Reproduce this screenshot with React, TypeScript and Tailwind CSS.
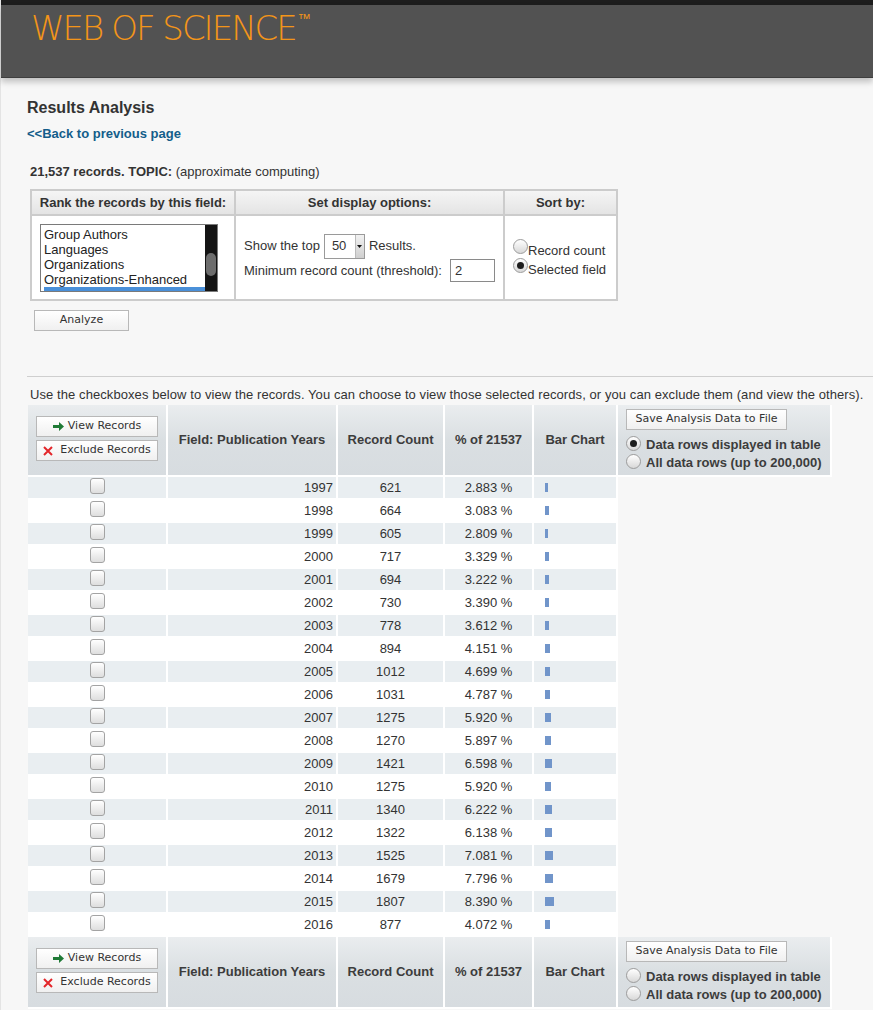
import React from 'react';

const rows: [number, number, string][] = [
  [1997, 621, '2.883'],
  [1998, 664, '3.083'],
  [1999, 605, '2.809'],
  [2000, 717, '3.329'],
  [2001, 694, '3.222'],
  [2002, 730, '3.390'],
  [2003, 778, '3.612'],
  [2004, 894, '4.151'],
  [2005, 1012, '4.699'],
  [2006, 1031, '4.787'],
  [2007, 1275, '5.920'],
  [2008, 1270, '5.897'],
  [2009, 1421, '6.598'],
  [2010, 1275, '5.920'],
  [2011, 1340, '6.222'],
  [2012, 1322, '6.138'],
  [2013, 1525, '7.081'],
  [2014, 1679, '7.796'],
  [2015, 1807, '8.390'],
  [2016, 877, '4.072'],
];

const btnFont = "font-['DejaVu_Sans',Verdana,sans-serif]";

function Radio({ checked }: { checked?: boolean }) {
  return (
    <span className="w-[15px] h-[15px] shrink-0 rounded-full border border-[#9c9c9c] bg-gradient-to-b from-white to-[#d8d8d8] flex items-center justify-center">
      {checked && <span className="w-[7px] h-[7px] rounded-full bg-[#1d1d1d]" />}
    </span>
  );
}

function Checkbox() {
  return (
    <span className="block w-[15px] h-[16px] rounded-[3px] border border-[#a3a3a3] bg-gradient-to-b from-white to-[#dedede]" />
  );
}

function Btn({ children, className = '' }: { children: React.ReactNode; className?: string }) {
  return (
    <button
      className={`h-[21px] border border-[#b8b8b8] bg-gradient-to-b from-white to-[#f0f0f0] text-[11px] font-normal text-[#333] flex items-center justify-center ${btnFont} ${className}`}
    >
      {children}
    </button>
  );
}

function ArrowIcon() {
  return (
    <svg width="11" height="9" viewBox="0 0 11 9" className="mr-[4px]">
      <path d="M0 3h6V0l5 4.5L6 9V6H0z" fill="#1f7a36" />
    </svg>
  );
}

function XIcon() {
  return (
    <svg width="10" height="10" viewBox="0 0 10 10" className="mr-[7px]">
      <path d="M1 1l8 8M9 1L1 9" stroke="#e3262a" strokeWidth="2" />
    </svg>
  );
}

function HeaderRow({ checkedFirst }: { checkedFirst: boolean }) {
  const th =
    'bg-gradient-to-b from-[#eaedef] via-[#dadfe2] to-[#d7dce0] border-r-2 border-b-2 border-white flex items-center justify-center font-bold text-[13px] text-[#3c3c3c]';
  return (
    <div className="flex h-[72px]">
      <div className={`${th} w-[140px] flex-col gap-[3px] !justify-start pt-[11px]`}>
        <Btn className="w-[122px]">
          <ArrowIcon />
          View Records
        </Btn>
        <Btn className="w-[122px]">
          <XIcon />
          Exclude Records
        </Btn>
      </div>
      <div className={`${th} w-[170px]`}>Field: Publication Years</div>
      <div className={`${th} w-[107px]`}>Record Count</div>
      <div className={`${th} w-[89px]`}>% of 21537</div>
      <div className={`${th} w-[84px]`}>Bar Chart</div>
      <div className={`${th} w-[214px] flex-col !items-start !justify-start pl-[8px] pt-[4px]`}>
        <Btn className="w-[161px]">Save Analysis Data to File</Btn>
        <div className="flex items-center gap-[5px] mt-[4px] h-[18px]">
          <Radio checked={checkedFirst} />
          <span className="mt-[3px]">Data rows displayed in table</span>
        </div>
        <div className="flex items-center gap-[5px] h-[18px]">
          <Radio />
          <span className="mt-[3px]">All data rows (up to 200,000)</span>
        </div>
      </div>
    </div>
  );
}

function DataRow({ year, count, pct, shaded }: { year: number; count: number; pct: string; shaded: boolean }) {
  const bg = shaded ? 'bg-[#e9eef1]' : 'bg-white';
  const td = `${bg} border-r-2 border-b-2 border-white h-[23px] flex items-center`;
  return (
    <div className="flex">
      <div className={`${td} w-[140px] justify-center`}>
        <span className="-mt-[3px]">
          <Checkbox />
        </span>
      </div>
      <div className={`${td} w-[170px] justify-end pr-[3px]`}>{year}</div>
      <div className={`${td} w-[107px] justify-center`}>{count}</div>
      <div className={`${td} w-[89px] justify-center`}>{pct} %</div>
      <div className={`${td} w-[84px] pl-[11px]`}>
        <span className="block h-[9px] bg-[#7195ca]" style={{ width: Math.ceil(parseFloat(pct)) }} />
      </div>
    </div>
  );
}

export default function App() {
  return (
    <div className="min-h-[1010px] bg-[#f7f7f7] border-l border-[#e4e4e4] font-['Liberation_Sans',Arial,sans-serif] text-[13px] text-[#333]">
      <div className="h-[5px] bg-[#1d1d1d]" />
      <header className="h-[73px] bg-[#525252] border-b border-[#3e3e3e] shadow-[0_4px_6px_rgba(0,0,0,0.22)] pl-[30px] pt-[3px]">
        <div className="flex items-start text-[#f39519] font-['DejaVu_Sans',sans-serif] font-extralight">
          <span className="text-[34px] leading-[40px] tracking-[-2px]">WEB OF SCIENCE</span>
          <span className="text-[13px] leading-none mt-[4px] ml-[2px]">™</span>
        </div>
      </header>

      <main className="pl-[26px]">
        <h1 className="mt-[20px] text-[16px] leading-[20px] font-bold text-[#333]">Results Analysis</h1>
        <a className="block mt-[8px] text-[13px] leading-[16px] font-bold text-[#135d8a]">&lt;&lt;Back to previous page</a>

        <p className="mt-[22px] ml-[3px] leading-[16px]">
          <b>21,537 records. TOPIC:</b> (approximate computing)
        </p>

        <div className="mt-[9px] ml-[3px] w-[588px] bg-[#cccccc] p-[2px] grid grid-cols-[202px_267px_111px] grid-rows-[23px_83px] gap-[2px]">
          <div className="bg-gradient-to-b from-[#f5f5f5] to-[#e4e4e4] flex items-center justify-center font-bold text-[#333]">
            Rank the records by this field:
          </div>
          <div className="bg-gradient-to-b from-[#f5f5f5] to-[#e4e4e4] flex items-center justify-center font-bold text-[#333]">
            Set display options:
          </div>
          <div className="bg-gradient-to-b from-[#f5f5f5] to-[#e4e4e4] flex items-center justify-center font-bold text-[#333]">
            Sort by:
          </div>

          <div className="bg-white pl-[8px] pt-[8px]">
            <div className="w-[178px] h-[68px] border border-[#7a7a7a] bg-white flex overflow-hidden">
              <div className="flex-1 pl-[3px] pt-[2px] text-[13px] leading-[15px] text-[#222] overflow-hidden">
                <div>Group Authors</div>
                <div>Languages</div>
                <div>Organizations</div>
                <div>Organizations-Enhanced</div>
                <div className="bg-[#4a90d9] h-[4px]" />
              </div>
              <div className="w-[12px] bg-[#141414] flex justify-center pt-[28px]">
                <span className="block w-[10px] h-[23px] rounded-[5px] bg-[#6d6d6d]" />
              </div>
            </div>
          </div>

          <div className="bg-white pl-[8px] pt-[18px]">
            <div className="flex items-center h-[24px]">
              <span>Show the top</span>
              <span className="ml-[4px] w-[41px] h-[25px] border border-[#9a9a9a] bg-white flex items-center">
                <span className="flex-1 pl-[7px]">50</span>
                <span className="w-[9px] h-[23px] bg-gradient-to-b from-[#f2f2f2] to-[#cfcfcf] border-l border-[#bbb] flex items-center justify-center">
                  <svg width="5" height="3" viewBox="0 0 5 3">
                    <path d="M0 0h5L2.5 3z" fill="#111" />
                  </svg>
                </span>
              </span>
              <span className="ml-[4px]">Results.</span>
            </div>
            <div className="flex items-center mt-[1px]">
              <span>Minimum record count (threshold):</span>
              <span className="ml-[8px] w-[45px] h-[23px] border border-[#8a8a8a] bg-white pl-[4px] flex items-center">2</span>
            </div>
          </div>

          <div className="bg-white pl-[8px] pt-[23px] text-[13px]">
            <div className="flex items-start h-[19px]">
              <Radio />
              <span className="mt-[4px] leading-[16px]">Record count</span>
            </div>
            <div className="flex items-start h-[19px]">
              <Radio checked />
              <span className="mt-[4px] leading-[16px]">Selected field</span>
            </div>
          </div>
        </div>

        <Btn className="mt-[9px] ml-[7px] w-[95px]">Analyze</Btn>

        <div className="mt-[45px] h-px bg-[#cfcfcf]" />

        <p className="mt-[10px] ml-[3px] leading-[16px] tracking-[0.08px]">
          Use the checkboxes below to view the records. You can choose to view those selected records, or you can exclude
          them (and view the others).
        </p>

        <div className="mt-[2px] ml-[1px]">
          <HeaderRow checkedFirst />
          {rows.map(([y, c, p], i) => (
            <DataRow key={y} year={y} count={c} pct={p} shaded={i % 2 === 0} />
          ))}
          <HeaderRow checkedFirst={false} />
        </div>
      </main>
    </div>
  );
}
